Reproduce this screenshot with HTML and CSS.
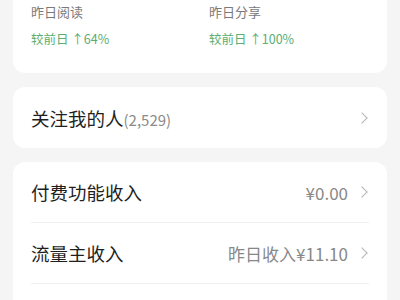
FILE: index.html
```html
<!DOCTYPE html>
<html>
<head lang="en">
    <meta charset="UTF-8">
    <title></title>
    <link rel="stylesheet" href="styles.css">
</head>
<body>
<div class="page">
    <div class="card stats">
        <div class="stat">
            <div class="label">昨日阅读</div>
            <div class="trend">较前日 ↑64%</div>
        </div>
        <div class="stat">
            <div class="label">昨日分享</div>
            <div class="trend">较前日 ↑100%</div>
        </div>
    </div>
    <div class="card">
        <div class="row">
            <div class="title">关注我的人<span class="count">(2,529)</span></div>
            <div class="chev"></div>
        </div>
    </div>
    <div class="card list">
        <div class="row line">
            <div class="title">付费功能收入</div>
            <div class="value">¥0.00</div>
            <div class="chev"></div>
        </div>
        <div class="row line">
            <div class="title">流量主收入</div>
            <div class="value">昨日收入¥11.10</div>
            <div class="chev"></div>
        </div>
    </div>
</div>
</body>
</html>
```

FILE: styles.css
```css
* {
    margin: 0;
    padding: 0;
}

body {
    background-color: #f4f5f4;
    font-family: "Noto Sans CJK SC", "Noto Sans", sans-serif;
    overflow: hidden;
}

.page {
    padding: 0 13px;
    margin-top: -20px;
}

.card {
    background-color: #fff;
    border-radius: 12px;
    margin-bottom: 14px;
}

/* 顶部统计 */
.stats {
    display: flex;
    padding: 22px 18px 24px;
}
.stat {
    flex: 1;
}
.stat:first-child {
    flex: none;
    width: 178px;
}
.label {
    font-size: 13px;
    line-height: 20px;
    color: #7a7a7a;
}
.trend {
    margin-top: 7px;
    font-size: 12.5px;
    line-height: 20px;
    color: #5aae70;
}

.row {
    display: flex;
    align-items: center;
    height: 61px;
    margin: 0 18px;
}
.line {
    height: 60px;
    border-bottom: 1px solid #f0f0f0;
}
.list {
    padding-bottom: 40px;
}
.title {
    flex: 1;
    font-size: 18.5px;
    color: #1f1f1f;
}
.count {
    font-size: 15px;
    color: #8a8a8a;
}
.value {
    font-size: 17px;
    color: #888;
    margin-right: 10px;
}
.chev {
    width: 7px;
    height: 7px;
    border-top: 1.3px solid #b5b5b5;
    border-right: 1.3px solid #b5b5b5;
    transform: rotate(45deg);
    margin-right: 3px;
}
```
